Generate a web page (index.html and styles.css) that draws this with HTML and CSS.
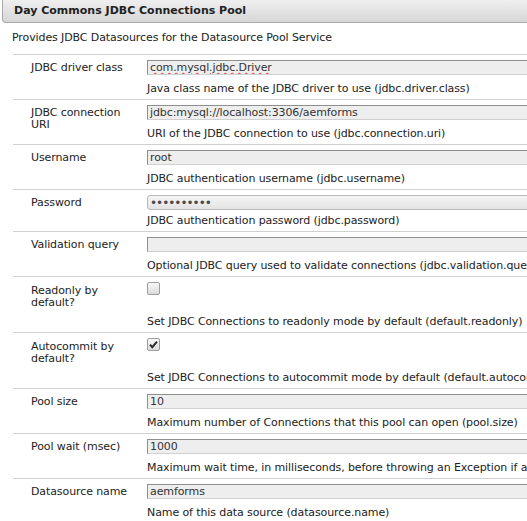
FILE: index.html
```html
<!DOCTYPE html>
<html lang="en">
<head>
<meta charset="utf-8">
<title>Day Commons JDBC Connections Pool</title>
<link rel="stylesheet" href="styles.css">
</head>
<body>
<div class="panel">
  <div class="title">Day Commons JDBC Connections Pool</div>
  <p class="intro">Provides JDBC Datasources for the Datasource Pool Service</p>
  <div class="rows">
    <div class="row">
      <div class="label">JDBC driver class</div>
      <div class="value">
        <div class="field"><span class="spell">com.mysql.jdbc.Driver</span></div>
        <div class="desc">Java class name of the JDBC driver to use (jdbc.driver.class)</div>
      </div>
    </div>
    <div class="row">
      <div class="label">JDBC connection URI</div>
      <div class="value">
        <div class="field">jdbc:mysql://localhost:3306/aemforms</div>
        <div class="desc">URI of the JDBC connection to use (jdbc.connection.uri)</div>
      </div>
    </div>
    <div class="row">
      <div class="label">Username</div>
      <div class="value">
        <div class="field">root</div>
        <div class="desc">JDBC authentication username (jdbc.username)</div>
      </div>
    </div>
    <div class="row">
      <div class="label">Password</div>
      <div class="value">
        <input class="field pw" type="password" value="aemformsdb">
        <div class="desc desc-pw">JDBC authentication password (jdbc.password)</div>
      </div>
    </div>
    <div class="row">
      <div class="label">Validation query</div>
      <div class="value">
        <div class="field"></div>
        <div class="desc">Optional JDBC query used to validate connections (jdbc.validation.query)</div>
      </div>
    </div>
    <div class="row">
      <div class="label label-check">Readonly by default?</div>
      <div class="value">
        <div class="check-wrap"><span class="check"></span></div>
        <div class="desc">Set JDBC Connections to readonly mode by default (default.readonly)</div>
      </div>
    </div>
    <div class="row">
      <div class="label label-check">Autocommit by default?</div>
      <div class="value">
        <div class="check-wrap"><span class="check"><svg class="tick" viewBox="0 0 11 11" width="11" height="11"><path d="M2 5.6 L4.3 8.2 L9 2.6" fill="none" stroke="#2b2b2b" stroke-width="2"/></svg></span></div>
        <div class="desc">Set JDBC Connections to autocommit mode by default (default.autocommit)</div>
      </div>
    </div>
    <div class="row">
      <div class="label">Pool size</div>
      <div class="value">
        <div class="field">10</div>
        <div class="desc">Maximum number of Connections that this pool can open (pool.size)</div>
      </div>
    </div>
    <div class="row">
      <div class="label">Pool wait (msec)</div>
      <div class="value">
        <div class="field">1000</div>
        <div class="desc">Maximum wait time, in milliseconds, before throwing an Exception if all pooled connections are in use (pool.maxWait)</div>
      </div>
    </div>
    <div class="row">
      <div class="label">Datasource name</div>
      <div class="value">
        <div class="field">aemforms</div>
        <div class="desc">Name of this data source (datasource.name)</div>
      </div>
    </div>
  </div>
</div>
</body>
</html>
```

FILE: styles.css
```css
html, body {
  margin: 0;
  padding: 0;
  overflow: hidden;
  background: #ffffff;
}

body {
  font-family: "DejaVu Sans", Verdana, sans-serif;
  font-size: 11px;
  letter-spacing: -0.1px;
  color: #222222;
}

.panel {
  width: 720px;
}

.title {
  margin-left: 2px;
  height: 22px;
  line-height: 22px;
  padding-left: 11px;
  border: 1px solid #a9a9a9;
  border-top: none;
  border-radius: 0 0 0 4px;
  background: linear-gradient(#efefef, #d6d6d6);
  font-weight: bold;
  letter-spacing: 0;
  color: #222222;
}

.intro {
  margin: 8px 0 10px 12px;
  line-height: 13px;
}

.rows {
  margin-left: 13px;
}

.row {
  display: grid;
  grid-template-columns: 134px 1fr;
  border-top: 1px solid #d0d0d0;
}

.label {
  padding: 7px 12px 0 18px;
  line-height: 12px;
}

.label-check {
  padding-top: 8px;
}

.value {
  padding: 5px 0 4px;
  min-width: 0;
}

.field {
  display: block;
  box-sizing: border-box;
  width: 100%;
  height: 15px;
  margin: 0;
  padding: 0 2px;
  border: 1px solid;
  border-color: #8e8e8e #d0d0d0 #d0d0d0 #8e8e8e;
  background: #eeeeee;
  font: inherit;
  letter-spacing: inherit;
  color: #333333;
  line-height: 13px;
  white-space: nowrap;
  overflow: hidden;
}

.spell {
  text-decoration: underline wavy #e23a3a;
  text-decoration-thickness: 1px;
  text-underline-offset: 1px;
}

.pw {
  border-radius: 3px;
  border-color: #b9b9b9;
  background: linear-gradient(#f5f5f5, #e3e3e3);
  font-size: 12px;
  letter-spacing: -1px;
  color: #4a4a4a;
  outline: none;
}

.desc {
  margin-top: 7px;
  line-height: 13px;
  white-space: nowrap;
}

.desc-pw {
  margin-top: 4px;
}

.check-wrap {
  height: 26px;
}

.check {
  display: block;
  box-sizing: border-box;
  width: 13px;
  height: 13px;
  border: 1px solid #9c9c9c;
  border-radius: 2px;
  background: linear-gradient(#f7f7f7, #dcdcdc);
}

.tick {
  display: block;
}
```
